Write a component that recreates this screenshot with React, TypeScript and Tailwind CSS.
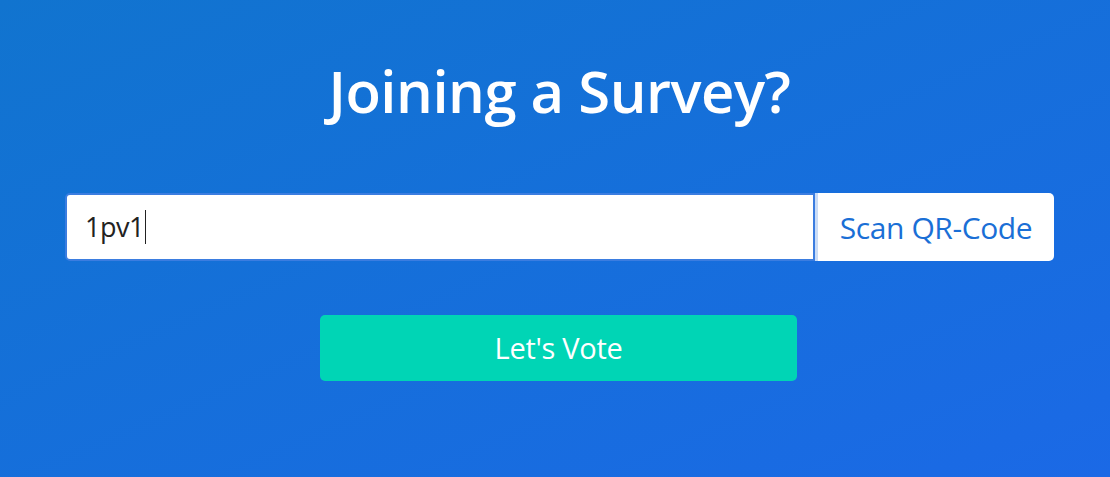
import React from "react";

export default function App() {
  return (
    <div
      className="w-[1110px] h-[477px] overflow-hidden bg-gradient-to-br from-[#1174cf] to-[#1b69e6]"
      style={{ fontFamily: '"Open Sans", "Noto Sans", sans-serif' }}
    >
      <div className="ml-[65px] w-[989px] flex flex-col items-center">
        <h1 className="mt-[52px] text-[58px] leading-[78px] font-semibold text-white tracking-[-0.5px]">
          Joining a Survey?
        </h1>
        <div className="mt-[63px] w-full flex h-[68px]">
          <div className="flex-1 flex items-center bg-white rounded-l-[5px] border-2 border-[#3b7de0] pl-[18px]">
            <span className="text-[27px] text-[#222] tracking-[-0.5px]">1pv1</span>
            <span className="w-px h-[34px] bg-[#222] ml-[1px]" />
          </div>
          <button className="w-[239px] flex items-center justify-center bg-white rounded-r-[5px] border-l-[3px] border-[#c9dcf7] text-[30px] text-[#1a6fd6] tracking-[-0.4px]">
            Scan QR-Code
          </button>
        </div>
        <button className="mt-[54px] -ml-[2px] w-[477px] h-[66px] rounded-[5px] bg-[#00d5b5] text-white text-[29px] tracking-[-0.3px] flex items-center justify-center">
          Let's Vote
        </button>
      </div>
    </div>
  );
}
